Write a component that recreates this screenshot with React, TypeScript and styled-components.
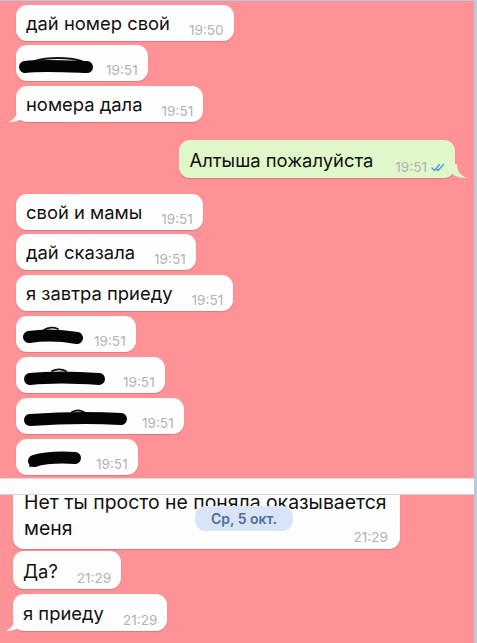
import React from "react";
import styled, { createGlobalStyle } from "styled-components";

const Global = createGlobalStyle`
  html, body { margin: 0; padding: 0; background: #fe9296; }
  body { font-family: Inter, "Liberation Sans", sans-serif; }
`;

const Page = styled.div`
  width: 477px;
  height: 643px;
  box-sizing: border-box;
  background: #fe9296;
  border-top: 1px solid #b7c9de;
  border-right: 3px solid #b7c9de;
  overflow: hidden;
  display: flex;
  flex-direction: column;
`;

const Upper = styled.div`
  display: flex;
  flex-direction: column;
  align-items: flex-start;
  padding: 4px 16px 0 16px;
`;

const Lower = styled.div`
  position: relative;
  display: flex;
  flex-direction: column;
  align-items: flex-start;
  padding: 0 0 0 13px;
  margin-top: -10px;
`;

const Bubble = styled.div<{ $mt?: number; $green?: boolean; $h?: number }>`
  position: relative;
  display: inline-flex;
  align-items: flex-end;
  box-sizing: border-box;
  height: ${(p) => p.$h ?? 36}px;
  margin-top: ${(p) => p.$mt ?? 0}px;
  padding: 7px 10px 7px 10px;
  border-radius: 11px;
  background: ${(p) => (p.$green ? "#dff7c9" : "#fefefe")};
  box-shadow: 0 1px 1px rgba(120, 40, 40, 0.25);
  color: #111;
  font-size: 18.4px;
  line-height: 22px;
  white-space: nowrap;
  ${(p) => (p.$green ? "align-self: flex-end; margin-right: 3px;" : "")}
`;

const Text = styled.span`
  display: inline-block;
`;

const Time = styled.span<{ $gap?: number }>`
  display: inline-flex;
  align-items: center;
  gap: 4px;
  margin-left: ${(p) => p.$gap ?? 19}px;
  margin-bottom: -3px;
  font-size: 13.6px;
  line-height: 14px;
  color: #b2b2b2;
`;

const TailLeft = styled.svg`
  position: absolute;
  left: -8px;
  bottom: 0;
`;

const TailRight = styled.svg`
  position: absolute;
  right: -12px;
  bottom: 0;
`;

const Seam = styled.div`
  position: relative;
  z-index: 2;
  height: 15px;
  margin-top: 3px;
  background: #fdfdfe;
  border-top: 1px solid #f2d6d8;
  border-bottom: 1px solid #d9d2d4;
`;

const BigBubble = styled.div`
  position: relative;
  box-sizing: border-box;
  width: 387px;
  padding: 4px 10px 8px 11px;
  border-radius: 0 0 11px 11px;
  background: #fefefe;
  box-shadow: 0 1px 1px rgba(120, 40, 40, 0.25);
  color: #111;
  font-size: 19.4px;
  line-height: 26px;
  white-space: nowrap;
`;

const LastLine = styled.div`
  display: flex;
  justify-content: space-between;
  align-items: flex-end;
  padding-right: 2px;
`;

const DatePill = styled.div`
  position: absolute;
  left: 195px;
  top: 21px;
  z-index: 3;
  width: 98px;
  height: 25px;
  border-radius: 11px;
  background: #d9e5f6;
  color: #4f6f99;
  font-size: 14px;
  font-weight: 600;
  display: flex;
  align-items: center;
  justify-content: center;
`;

const Ticks = () => (
  <svg width="14" height="9" viewBox="0 0 14 9">
    <path d="M1 5 L3.5 7.5 L8.5 1.5" fill="none" stroke="#4a9be0" strokeWidth="1.3" strokeLinecap="round" strokeLinejoin="round" />
    <path d="M6 6.5 L7 7.5 L12.5 1.5" fill="none" stroke="#4a9be0" strokeWidth="1.3" strokeLinecap="round" strokeLinejoin="round" />
  </svg>
);

const Left = () => (
  <TailLeft width="14" height="14" viewBox="0 0 14 14">
    <path d="M14 0 L10 0 C10 7 6 12 0 14 C6 14 10 13 14 11 Z" fill="#fefefe" />
  </TailLeft>
);

const Right = () => (
  <TailRight width="14" height="14" viewBox="0 0 14 14">
    <path d="M0 0 L4 0 C4 7 8 12 14 14 C8 14 4 13 0 11 Z" fill="#dff7c9" />
  </TailRight>
);

type ScribbleProps = { w: number; d: string; thin?: string };
const Scribble = ({ w, d, thin }: ScribbleProps) => (
  <svg width={w} height="22" viewBox={`0 0 ${w} 22`} style={{ marginLeft: -8 }}>
    {thin && <path d={thin} fill="none" stroke="#111" strokeWidth="1.8" strokeLinecap="round" />}
    <path d={d} fill="none" stroke="#050505" strokeWidth="12" strokeLinecap="round" strokeLinejoin="round" />
  </svg>
);

export default function App() {
  return (
    <>
      <Global />
      <Page>
        <Upper>
          <Bubble $mt={0}>
            <Text>дай номер свой</Text>
            <Time>19:50</Time>
          </Bubble>
          <Bubble $mt={4}>
            <Scribble w={76} d="M7 15 C22 13 42 14 69 15" thin="M16 9 C30 5 50 5 64 9" />
            <Time $gap={12}>19:51</Time>
          </Bubble>
          <Bubble $mt={5}>
            <Left />
            <Text>номера дала</Text>
            <Time>19:51</Time>
          </Bubble>
          <Bubble $mt={18} $green $h={38}>
            <Right />
            <Text>Алтыша пожалуйста</Text>
            <Time $gap={22}>
              19:51
              <Ticks />
            </Time>
          </Bubble>
          <Bubble $mt={16}>
            <Text>свой и мамы</Text>
            <Time>19:51</Time>
          </Bubble>
          <Bubble $mt={4}>
            <Text>дай сказала</Text>
            <Time>19:51</Time>
          </Bubble>
          <Bubble $mt={5}>
            <Text>я завтра приеду</Text>
            <Time>19:51</Time>
          </Bubble>
          <Bubble $mt={5}>
            <Scribble w={66} d="M11 14 C24 12 42 12 59 15" thin="M26 7 C30 4 36 4 40 6" />
            <Time $gap={10}>19:51</Time>
          </Bubble>
          <Bubble $mt={5}>
            <Scribble w={88} d="M12 15 C30 13 55 13 81 15" thin="M34 7 C38 5 44 5 48 7" />
            <Time $gap={17}>19:51</Time>
          </Bubble>
          <Bubble $mt={5}>
            <Scribble w={110} d="M12 15 C40 13 70 12 103 14" thin="M54 7 C58 5 62 5 66 7" />
            <Time $gap={14}>19:51</Time>
          </Bubble>
          <Bubble $mt={5}>
            <Scribble w={64} d="M16 15 C26 12 40 11 57 12" thin="M12 20 C14 19 16 19 18 20" />
            <Time $gap={14}>19:51</Time>
          </Bubble>
        </Upper>
        <Seam />
        <Lower>
          <DatePill>Ср, 5 окт.</DatePill>
          <BigBubble>
            <div>Нет ты просто не поняла оказывается</div>
            <LastLine>
              <span>меня</span>
              <Time>21:29</Time>
            </LastLine>
          </BigBubble>
          <Bubble $mt={2} $h={38}>
            <Text>Да?</Text>
            <Time>21:29</Time>
          </Bubble>
          <Bubble $mt={5} $h={37}>
            <Left />
            <Text>я приеду</Text>
            <Time>21:29</Time>
          </Bubble>
        </Lower>
      </Page>
    </>
  );
}
